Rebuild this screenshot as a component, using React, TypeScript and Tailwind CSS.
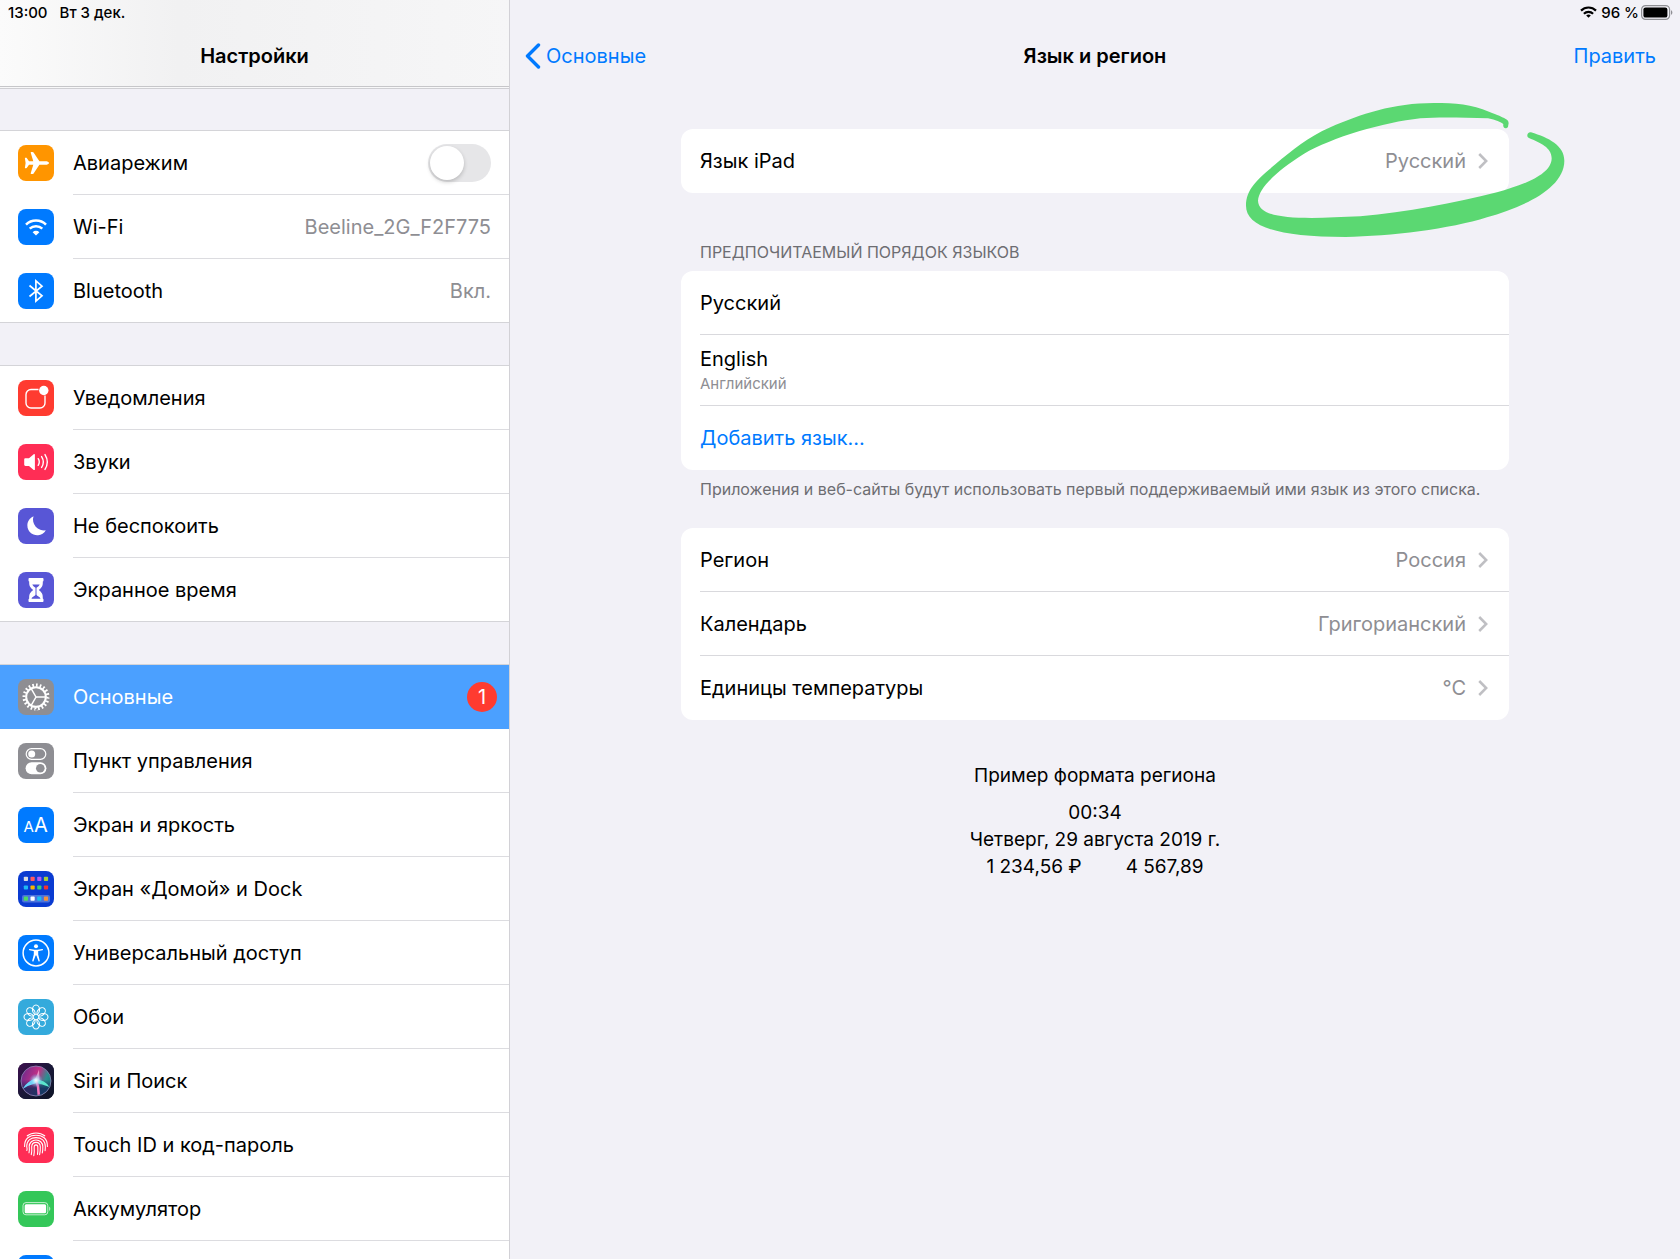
import { useState } from 'react'
import type { ReactNode } from 'react'

type SidebarItem = {
  label: string
  icon: ReactNode
  value?: string
  badge?: number
  active?: boolean
}

const connectivity: SidebarItem[] = [
  { label: 'Wi-Fi', icon: <WifiIcon />, value: 'Beeline_2G_F2F775' },
  { label: 'Bluetooth', icon: <BluetoothIcon />, value: 'Вкл.' },
]

const alerts: SidebarItem[] = [
  { label: 'Уведомления', icon: <NotificationsIcon /> },
  { label: 'Звуки', icon: <SoundsIcon /> },
  { label: 'Не беспокоить', icon: <MoonIcon /> },
  { label: 'Экранное время', icon: <HourglassIcon /> },
]

const general: SidebarItem[] = [
  { label: 'Основные', icon: <GearIcon />, badge: 1, active: true },
  { label: 'Пункт управления', icon: <ControlCenterIcon /> },
  { label: 'Экран и яркость', icon: <DisplayIcon /> },
  { label: 'Экран «Домой» и Dock', icon: <HomeScreenIcon /> },
  { label: 'Универсальный доступ', icon: <AccessibilityIcon /> },
  { label: 'Обои', icon: <WallpaperIcon /> },
  { label: 'Siri и Поиск', icon: <SiriIcon /> },
  { label: 'Touch ID и код-пароль', icon: <TouchIdIcon /> },
  { label: 'Аккумулятор', icon: <BatteryIcon /> },
  { label: '', icon: <PrivacyIcon /> },
]

export default function App() {
  const [airplane, setAirplane] = useState(false)

  return (
    <div className="flex h-screen overflow-hidden bg-[#f2f1f7] font-['Inter','Noto_Sans',sans-serif] text-xl text-black">
      {/* Боковая панель */}
      <aside className="flex w-[510px] shrink-0 flex-col overflow-hidden border-r border-[#d2d1d6]">
        <header className="shrink-0 border-b border-[#c6c6c9] bg-linear-to-r from-[#fbfbfb] via-[#f1f1f2] via-35% to-[#f6f6f7]">
          <div className="flex h-[26px] items-center gap-3 px-2 pb-0.5 text-[15px] font-medium">
            <span>13:00</span>
            <span>Вт 3 дек.</span>
          </div>
          <h1 className="flex h-[60px] items-center justify-center font-semibold">Настройки</h1>
        </header>
        <div className="h-px shrink-0 bg-[#f8f8f9]" />
        <nav className="flex flex-col gap-[42px] border-t border-[#cfcfd3] pt-[41px]">
          <ul className="border-t border-[#d4d4d8] bg-white">
            <li>
              <label className="flex h-16 items-center gap-[19px] pl-[18px]">
                <AirplaneIcon />
                <span className="flex h-full flex-1 items-center justify-between border-b border-[#dcdce0] pr-[18px]">
                  Авиарежим
                  <input
                    type="checkbox"
                    role="switch"
                    checked={airplane}
                    onChange={(e) => setAirplane(e.target.checked)}
                    className="h-[38px] w-[63px] cursor-pointer appearance-none rounded-full bg-[#e6e6e8] p-0.5 before:block before:size-[34px] before:rounded-full before:bg-white before:shadow-[0_2px_4px_rgba(0,0,0,0.2)] before:transition-transform checked:bg-[#34c759] checked:before:translate-x-[25px]"
                  />
                </span>
              </label>
            </li>
            {connectivity.map((item, i) => (
              <SidebarRow key={i} item={item} last={i === connectivity.length - 1} />
            ))}
          </ul>
          <ul className="border-t border-[#d4d4d8] bg-white">
            {alerts.map((item, i) => (
              <SidebarRow key={i} item={item} last={i === alerts.length - 1} />
            ))}
          </ul>
          <ul className="border-t border-[#d4d4d8] bg-white">
            {general.map((item, i) => (
              <SidebarRow key={i} item={item} last={i === general.length - 1} />
            ))}
          </ul>
        </nav>
      </aside>

      {/* Язык и регион */}
      <main className="min-w-0 flex-1">
        <div className="flex h-[26px] items-center justify-end gap-0.5 pr-[7px] pb-0.5 text-[15px] font-medium">
          <svg viewBox="0 0 17 12" className="mr-0.5 h-3 w-[17px]" fill="none" stroke="#000" strokeWidth="2.2">
            <path d="M1 4.6a10.6 10.6 0 0 1 15 0" />
            <path d="M3.9 7.7a6.5 6.5 0 0 1 9.2 0" />
            <path d="M8.5 11.8 6.2 9.5a3.3 3.3 0 0 1 4.6 0z" fill="#000" stroke="none" />
          </svg>
          <span>96 %</span>
          <svg viewBox="0 0 32 15" className="h-[15px] w-8" fill="none">
            <rect x="0.6" y="0.6" width="28" height="13.8" rx="4" stroke="#8f8f94" strokeWidth="1.2" />
            <rect x="2.4" y="2.4" width="24" height="10.2" rx="2.2" fill="#000" />
            <path d="M30 5.2c1.8.6 1.8 4 0 4.6z" fill="#8f8f94" />
          </svg>
        </div>
        <header className="grid h-[60px] grid-cols-3 items-center px-[15px]">
          <a href="#general" className="flex items-center gap-[5px] text-[#007aff]">
            <svg viewBox="0 0 16 26" className="h-[26px] w-4" fill="none" stroke="currentColor" strokeWidth="3.4" strokeLinecap="round" strokeLinejoin="round">
              <path d="M13.5 2 2.5 13l11 11" />
            </svg>
            Основные
          </a>
          <h2 className="text-center font-semibold">Язык и регион</h2>
          <button type="button" className="justify-self-end pr-[9px] text-[#007aff]">Править</button>
        </header>

        <div className="mx-auto flex max-w-[828px] flex-col pt-[43px]">
          <section className="relative rounded-xl bg-white pl-[19px]">
            <DetailRow label="Язык iPad" value="Русский" last />
            <MarkerRing />
          </section>

          <h3 className="flex h-[78px] items-end px-[19px] pb-[7px] text-base text-[#6d6d72]">
            ПРЕДПОЧИТАЕМЫЙ ПОРЯДОК ЯЗЫКОВ
          </h3>
          <ul className="rounded-xl bg-white pl-[19px]">
            <li className="flex h-16 items-center border-b border-[#d9d9dd]">Русский</li>
            <li className="flex h-[71px] flex-col justify-center border-b border-[#d9d9dd]">
              <span className="leading-7">English</span>
              <span className="text-[15px] leading-[22px] text-[#8e8e93]">Английский</span>
            </li>
            <li>
              <button type="button" className="flex h-16 w-full items-center text-[#007aff]">Добавить язык...</button>
            </li>
          </ul>
          <p className="h-[58px] px-[19px] pt-[7px] text-base text-[#6d6d72]">
            Приложения и веб-сайты будут использовать первый поддерживаемый ими язык из этого списка.
          </p>

          <section className="rounded-xl bg-white pl-[19px]">
            <DetailRow label="Регион" value="Россия" />
            <DetailRow label="Календарь" value="Григорианский" />
            <DetailRow label="Единицы температуры" value="°C" last />
          </section>

          {/* Пример формата */}
          <div className="pt-[42px] text-center text-[19px] leading-[27px]">
            <p className="mb-2.5">Пример формата региона</p>
            <p>00:34</p>
            <p>Четверг, 29 августа 2019 г.</p>
            <p className="flex justify-center gap-11">
              <span>1 234,56 ₽</span>
              <span>4 567,89</span>
            </p>
          </div>
        </div>
      </main>
    </div>
  )
}

function SidebarRow({ item, last }: { item: SidebarItem; last: boolean }) {
  const { label, icon, value, badge, active } = item
  return (
    <li className={last ? 'border-b border-[#d4d4d8]' : ''}>
      <a
        href="#"
        className={`flex items-center gap-[19px] pl-[18px] ${last ? 'h-[63px]' : 'h-16'} ${active ? 'bg-[#4ba0ff] text-white' : ''}`}
      >
        {icon}
        <span
          className={`flex h-full flex-1 items-center justify-between ${badge ? 'pr-3' : 'pr-[18px]'} ${last || active ? '' : 'border-b border-[#dcdce0]'}`}
        >
          {label}
          {value && <span className="text-[#8e8e93]">{value}</span>}
          {badge && (
            <span className="flex size-[30px] items-center justify-center rounded-full bg-[#ff3b30] text-white">
              {badge}
            </span>
          )}
        </span>
      </a>
    </li>
  )
}

function DetailRow({ label, value, last }: { label: string; value: string; last?: boolean }) {
  return (
    <button
      type="button"
      className={`flex h-16 w-full items-center justify-between pr-[21px] ${last ? '' : 'border-b border-[#d9d9dd]'}`}
    >
      {label}
      <span className="flex items-center gap-3 text-[#8e8e93]">
        {value}
        <svg viewBox="0 0 10 16" className="h-4 w-2.5" fill="none" stroke="#bfbfc3" strokeWidth="2.5">
          <path d="M1.2 1 8.2 8l-7 7" />
        </svg>
      </span>
    </button>
  )
}

// зелёный маркер вокруг выбранного языка
function MarkerRing() {
  return (
    <svg
      viewBox="71 303 969 420"
      className="pointer-events-none absolute -top-[29px] -right-[58px] h-[140px] w-[323px]"
      fill="#5bd872"
      aria-hidden="true"
    >
      <path d="M865 372C865 362 858 358 806 338C755 316 705 312 640 312C520 312 420 345 330 385C262 415 218 452 165 496C115 538 77 568 77 620C77 680 165 714 375 714C510 712 690 690 800 655C905 625 1032 570 1032 485C1032 440 985 416 932 400C922 398 916 412 926 417C960 432 994 445 994 478C994 530 900 560 830 580C700 612 560 640 420 652C250 660 115 665 113 605C115 570 160 522 250 465C335 415 490 370 600 358C660 353 730 356 803 358Q838 366 849 375C846 390 860 390 863 383Z" />
    </svg>
  )
}

function Tile({ color, children }: { color: string; children: ReactNode }) {
  return (
    <svg viewBox="0 0 36 36" className={`size-9 shrink-0 rounded-lg ${color}`} fill="none" aria-hidden="true">
      {children}
    </svg>
  )
}

function AirplaneIcon() {
  return (
    <Tile color="bg-[#ff9500]">
      <path
        fill="#fff"
        d="M31 18c0-1.2-1.8-1.8-3.6-1.8h-6L15.6 7.6c-.3-.4-.6-.6-1.1-.6h-1.3c-.4 0-.6.3-.5.7l2.6 8.500h-4.3L8.900 13.2c-.2-.3-.4-.4-.7-.4H7.3c-.3 0-.5.2-.4.5L7.6 18l-.7 4.7c-.1.3.1.5.4.5h.9c.3 0 .5-.1.7-.4l2.1-3h4.3l-2.6 8.5c-.1.4.1.7.5.7h1.3c.5 0 .8-.2 1.1-.6l5.8-8.6h6c1.8 0 3.6-.6 3.6-1.8z"
      />
    </Tile>
  )
}

function WifiIcon() {
  return (
    <Tile color="bg-[#007aff]">
      <g stroke="#fff" strokeWidth="2.5">
        <path d="M8 15.7a14.2 14.2 0 0 1 20 0" />
        <path d="M11.7 19.7a9 9 0 0 1 12.6 0" />
      </g>
      <path d="M18 26.6l-3.4-3.4a4.9 4.9 0 0 1 6.8 0z" fill="#fff" />
    </Tile>
  )
}

function BluetoothIcon() {
  return (
    <Tile color="bg-[#007aff]">
      <path d="M11.5 12.5 24 22.8l-6.1 5.4V7.8l6.1 5.4L11.5 23.5" stroke="#fff" strokeWidth="1.7" />
    </Tile>
  )
}

function NotificationsIcon() {
  return (
    <Tile color="bg-[#ff3b30]">
      <path d="M20.5 9.5H13a5 5 0 0 0-5 5V23a5 5 0 0 0 5 5h9a5 5 0 0 0 5-5v-7.5" stroke="#fff" strokeWidth="1.4" />
      <circle cx="25.8" cy="10.5" r="4.7" fill="#fff" />
    </Tile>
  )
}

function SoundsIcon() {
  return (
    <Tile color="bg-[#ff2d55]">
      <path d="M6.2 15.600c0-.8.5-1.3 1.3-1.3H11l4.7-4c.5-.4 1.2-.2 1.2.5v14.6c0 .7-.7.9-1.2.5l-4.7-4H7.500c-.8 0-1.3-.5-1.3-1.3z" fill="#fff" />
      <g stroke="#fff" strokeWidth="1.4" strokeLinecap="round">
        <path d="M20.2 14.7a6 6 0 0 1 0 6.6" />
        <path d="M23.6 12.6a10 10 0 0 1 0 10.8" />
        <path d="M27 10.6a14 14 0 0 1 0 14.8" />
      </g>
    </Tile>
  )
}

function MoonIcon() {
  return (
    <Tile color="bg-[#5856d6]">
      <path d="M15.5 8.2A11 11 0 0 0 27.8 22.3 9.9 9.9 0 1 1 15.5 8.2z" fill="#fff" />
    </Tile>
  )
}

function HourglassIcon() {
  return (
    <Tile color="bg-[#5856d6]">
      <path
        d="M11.5 6h13c.6 0 1 .4 1 1v1.4c0 .5-.3.8-.7 1.1.3 4.6-1.3 6.3-4.1 8.5 2.8 2.2 4.4 3.9 4.1 8.5.4.3.7.6.7 1.1V29c0 .6-.4 1-1 1h-13c-.6 0-1-.4-1-1v-1.4c0-.5.3-.8.7-1.1-.3-4.6 1.3-6.3 4.1-8.5-2.8-2.2-4.4-3.9-4.1-8.5-.4-.3-.7-.6-.7-1.1V7c0-.6.4-1 1-1z"
        fill="#fff"
      />
      <path d="M14.3 12.6h7.4c-.3 1-1.8 2.3-3.2 3.2v6.7c0 .8.8 1.3 2 1.9 1.1.6 1.9 1.3 1.9 2.3h-8.8c0-1 .8-1.7 1.9-2.3 1.2-.6 2-1.1 2-1.9v-6.7c-1.4-.9-2.9-2.2-3.2-3.2z" fill="#5856d6" />
    </Tile>
  )
}

function GearIcon() {
  return (
    <Tile color="bg-[#8e8e93]">
      <g stroke="#fff">
        <circle cx="18" cy="18" r="11.9" strokeWidth="3.2" pathLength="40" strokeDasharray="0.9 1.1" />
        <circle cx="18" cy="18" r="9.8" strokeWidth="2" />
        <path d="M18 18h9.5M18 18l-4.8-8.4M18 18l-4.8 8.4" strokeWidth="1.5" />
      </g>
    </Tile>
  )
}

function ControlCenterIcon() {
  return (
    <Tile color="bg-[#8e8e93]">
      <rect x="8.2" y="5.7" width="19.6" height="10.6" rx="5.3" stroke="#fff" strokeWidth="1.2" />
      <circle cx="13.7" cy="11" r="3.5" fill="#fff" />
      <rect x="7.6" y="19.3" width="20.8" height="12" rx="6" fill="#fff" />
      <circle cx="22.3" cy="25.3" r="4.3" fill="#8e8e93" />
    </Tile>
  )
}

function DisplayIcon() {
  return (
    <Tile color="bg-[#007aff]">
      <text x="5.6" y="25.3" fontSize="15" fill="#fff">A</text>
      <text x="16" y="25.3" fontSize="20" fill="#fff">A</text>
    </Tile>
  )
}

function HomeScreenIcon() {
  const rows = [
    ['#d9dde0', '#ff5a5f', '#b45cf0', '#a6cf3a'],
    ['#1eb8f5', '#f7b500', '#38d070', '#f5322d'],
    ['#4fd964', '#ffffff', '#18c0f0', '#f5923c'],
  ]
  return (
    <Tile color="bg-[#0a3bd1]">
      <rect x="4" y="24" width="28" height="7.5" rx="2" fill="#4b74dc" />
      {rows.map((row, y) =>
        row.map((fill, x) => (
          <rect key={`${x}-${y}`} x={5.8 + x * 6.7} y={[5.8, 14.4, 25.6][y]} width="4.2" height="4.2" rx="0.8" fill={fill} />
        )),
      )}
    </Tile>
  )
}

function AccessibilityIcon() {
  return (
    <Tile color="bg-[#007aff]">
      <circle cx="18" cy="18" r="12.9" stroke="#fff" strokeWidth="1.5" />
      <circle cx="18" cy="11.2" r="2" fill="#fff" />
      <path d="M11.6 14.6l5 .9h2.8l5-.9" stroke="#fff" strokeWidth="1.3" strokeLinecap="round" />
      <path d="M15.8 15h4.4v4.500l1.7 6.8-1.3.3-2.2-6.1h-.8l-2.2 6.1-1.3-.3 1.7-6.8z" fill="#fff" />
    </Tile>
  )
}

function WallpaperIcon() {
  return (
    <Tile color="bg-[#34aadc]">
      {[0, 45, 90, 135, 180, 225, 270, 315].map((a) => (
        <ellipse key={a} cx="18" cy="10.7" rx="3.5" ry="4.7" transform={`rotate(${a} 18 18)`} stroke="#fff" strokeWidth="1.1" />
      ))}
    </Tile>
  )
}

function SiriIcon() {
  return (
    <Tile color="bg-[#17142e]">
      <defs>
        <linearGradient id="siri-bg" x1="0" y1="0" x2="1" y2="1">
          <stop offset="0" stopColor="#3d0f4f" />
          <stop offset="0.5" stopColor="#1a1838" />
          <stop offset="1" stopColor="#0d1426" />
        </linearGradient>
        <linearGradient id="siri-orb" x1="0" y1="0.2" x2="1" y2="0.6">
          <stop offset="0" stopColor="#6a2a8c" />
          <stop offset="0.5" stopColor="#c22f86" />
          <stop offset="0.8" stopColor="#2b8f90" />
          <stop offset="1" stopColor="#1c7f80" />
        </linearGradient>
        <linearGradient id="siri-low" x1="0" y1="0" x2="0" y2="1">
          <stop offset="0.45" stopColor="#142a5c" stopOpacity="0" />
          <stop offset="0.75" stopColor="#142a5c" stopOpacity="0.85" />
        </linearGradient>
        <radialGradient id="siri-glow">
          <stop offset="0" stopColor="#fff" />
          <stop offset="0.3" stopColor="#c9f4ff" stopOpacity="0.8" />
          <stop offset="1" stopColor="#5aa8f0" stopOpacity="0" />
        </radialGradient>
      </defs>
      <rect width="36" height="36" fill="url(#siri-bg)" />
      <circle cx="18" cy="18" r="15" fill="url(#siri-orb)" />
      <circle cx="18" cy="18" r="15" fill="url(#siri-low)" />
      <path d="M18 15.500Q9 18 4.5 26 11 22 18.500 20z" fill="#6ad6fa" />
      <path d="M17.500 16Q27 17 31.500 24 24 21 17.500 20z" fill="#5ae8cc" />
      <path d="M17 17q2.500 7 2.500 15l2.500-.5Q22 24 19.500 17z" fill="#f274bd" />
      <path d="M16.500 18 21 6.500l.5 11z" fill="#f5a6d4" fillOpacity="0.8" />
      <circle cx="18" cy="17.5" r="7" fill="url(#siri-glow)" />
      <circle cx="18" cy="18" r="15" stroke="#8d87b8" strokeWidth="0.8" />
    </Tile>
  )
}

function TouchIdIcon() {
  return (
    <Tile color="bg-[#ff2d55]">
      <g stroke="#fff" strokeWidth="1.1" strokeLinecap="round">
        <path d="M9.300 8.800C14 5 22 5 26.700 8.800" />
        <path d="M6.600 19.5c-.3-9 6-11.3 11.4-11.3s11.7 2.3 11.4 11.3" />
        <path d="M8.8 23.5c.6-1.5.2-3-.1-4.2.2-6 4.5-8.7 9.3-8.700s9.1 2.7 9.3 8.7c.1 1.6 0 3-.2 4.4" />
        <path d="M11 25.8c.7-2.3.4-4 .2-6.3.1-4 3.2-6.5 6.8-6.5s6.7 2.5 6.8 6.5c.1 2.3 0 4.3-.5 6.4" />
        <path d="M13.3 27.6c.7-2.7.6-5 .4-7.8.1-2.7 1.9-4.4 4.3-4.4s4.2 1.7 4.3 4.4c.1 3 0 5.3-.7 7.9" />
        <path d="M15.8 28.600c.6-2.9.6-5.600.4-8.500 0-1.4.7-2.200 1.8-2.200s1.8.8 1.8 2.200c.2 2.900 0 5.300-.3 7.300" />
      </g>
    </Tile>
  )
}

function BatteryIcon() {
  return (
    <Tile color="bg-[#34c759]">
      <rect x="5" y="11.6" width="24.8" height="12.2" rx="3" stroke="#fff" strokeOpacity="0.7" strokeWidth="1" />
      <rect x="6.7" y="13.2" width="21.4" height="9" rx="1.5" fill="#fff" />
      <path d="M31.2 15.5c1.5.8 1.5 3.6 0 4.4z" fill="#fff" fillOpacity="0.7" />
    </Tile>
  )
}

function PrivacyIcon() {
  return (
    <Tile color="bg-[#007aff]">
      <path d="M12 17v-5a3 3 0 0 1 6 0v-2a3 3 0 0 1 6 0v12a7 7 0 0 1-12 4z" fill="#fff" />
    </Tile>
  )
}
